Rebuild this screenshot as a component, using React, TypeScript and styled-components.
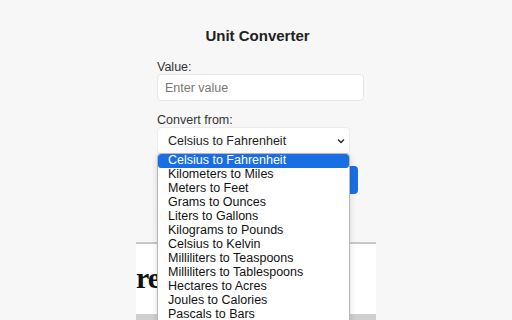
import React from 'react'
import styled, { createGlobalStyle } from 'styled-components'

const GlobalStyle = createGlobalStyle`
  html, body {
    margin: 0;
    padding: 0;
    background: #f7f7f7;
    font-family: "Liberation Sans", Arial, sans-serif;
  }
`

const Page = styled.div`
  width: 512px;
  height: 320px;
  overflow: hidden;
  position: relative;
`

const Column = styled.div`
  width: 240px;
  margin: 0 auto;
  display: flex;
  flex-direction: column;
`

const Title = styled.h1`
  margin: 27px 0 0 0;
  font-size: 15px;
  font-weight: bold;
  color: #222;
  text-align: center;
  padding-left: 3px;
`

const Form = styled.div`
  display: flex;
  flex-direction: column;
  padding: 0 12px 0 21px;
  margin-top: 17px;
  position: relative;
  z-index: 2;
`

const Label = styled.label<{ $top?: number }>`
  font-size: 12.5px;
  color: #333;
  line-height: 13px;
  margin-top: ${(p) => p.$top ?? 0}px;
`

const Input = styled.div`
  height: 27px;
  box-sizing: border-box;
  background: #fff;
  border: 1px solid #e6e6e6;
  border-radius: 4px;
  font-size: 12.5px;
  color: #777;
  display: flex;
  align-items: center;
  padding-left: 7px;
`

const Select = styled.div`
  width: 193px;
  height: 27px;
  box-sizing: border-box;
  margin-top: 0;
  background: #fff;
  border: 1px solid #ececec;
  border-radius: 4px;
  font-size: 12.5px;
  color: #222;
  display: flex;
  align-items: center;
  justify-content: space-between;
  padding: 0 3px 0 10px;
`

const Button = styled.div`
  width: 201px;
  height: 28px;
  margin-top: 12px;
  background: #1a6ee3;
  border-radius: 4px;
`

const Preview = styled.div`
  margin-top: 48px;
  height: 78px;
  border-top: 2px solid #c8c8c8;
  background: #fff;
  overflow: hidden;
  position: relative;
  z-index: 1;
`

const PreviewWord = styled.div`
  font-family: "Liberation Serif", "DejaVu Serif", serif;
  font-weight: bold;
  font-size: 30px;
  line-height: 30px;
  color: #111;
  margin: 19px 0 0 0;
  letter-spacing: -1px;
  white-space: nowrap;
`

const PreviewFooter = styled.div`
  position: absolute;
  left: 0;
  right: 0;
  bottom: 0;
  height: 8px;
  background: #cfcfcf;
`

const Dropdown = styled.ul`
  position: absolute;
  left: 21px;
  top: 92px;
  width: 193px;
  box-sizing: border-box;
  margin: 0;
  padding: 0;
  list-style: none;
  background: #fff;
  border: 1px solid #b8b8b8;
  border-radius: 4px;
  box-shadow: 0 2px 6px rgba(0, 0, 0, 0.15);
  overflow: hidden;
  height: 180px;
`

const Option = styled.li<{ $active?: boolean }>`
  height: 14px;
  line-height: 13px;
  font-size: 12.5px;
  padding-left: 10px;
  white-space: nowrap;
  color: ${(p) => (p.$active ? '#fff' : '#111')};
  background: ${(p) => (p.$active ? '#1a6ee3' : 'transparent')};
  border-radius: ${(p) => (p.$active ? '3px' : '0')};
`

const conversions = [
  'Celsius to Fahrenheit',
  'Kilometers to Miles',
  'Meters to Feet',
  'Grams to Ounces',
  'Liters to Gallons',
  'Kilograms to Pounds',
  'Celsius to Kelvin',
  'Milliliters to Teaspoons',
  'Milliliters to Tablespoons',
  'Hectares to Acres',
  'Joules to Calories',
  'Pascals to Bars',
]

const Chevron = () => (
  <svg width="10" height="10" viewBox="0 0 10 10">
    <path d="M2 3.5 L5 6.5 L8 3.5" fill="none" stroke="#222" strokeWidth="1.3" />
  </svg>
)

const App: React.FC = () => {
  return (
    <Page>
      <GlobalStyle />
      <Column>
        <Title>Unit Converter</Title>
        <Form>
          <Label>Value:</Label>
          <Input>Enter value</Input>
          <Label $top={13}>Convert from:</Label>
          <Select>
            <span>{conversions[0]}</span>
            <Chevron />
          </Select>
          <Button />
          <Dropdown>
            {conversions.map((c, i) => (
              <Option key={c} $active={i === 0}>
                {c}
              </Option>
            ))}
          </Dropdown>
        </Form>
        <Preview>
          <PreviewWord>re</PreviewWord>
          <PreviewFooter />
        </Preview>
      </Column>
    </Page>
  )
}

export default App
